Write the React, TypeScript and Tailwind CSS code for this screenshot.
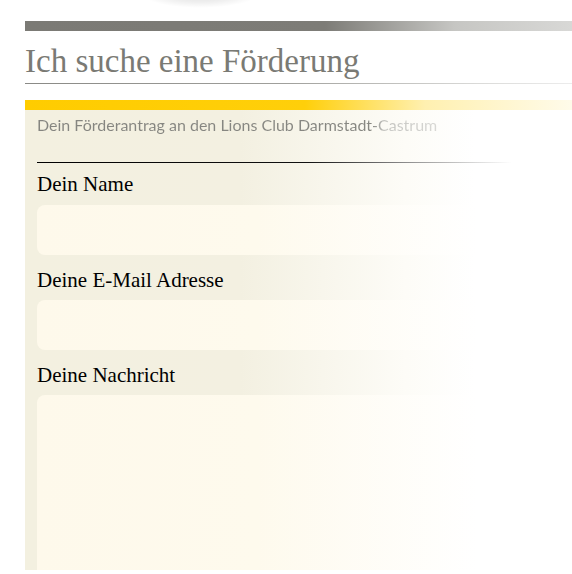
const serif = { fontFamily: '"Liberation Serif", "Times New Roman", serif' }
const lato = { fontFamily: 'Lato, "Open Sans", sans-serif' }

function Field({ label, tall, first }: { label: string; tall?: boolean; first?: boolean }) {
  return (
    <div>
      <div
        style={serif}
        className={`${first ? 'mt-[9px]' : 'mt-[13px]'} text-[21px] leading-[24px] text-black`}
      >
        {label}
      </div>
      <div
        className={`${first ? 'mt-[9px]' : 'mt-[8px]'} ${tall ? 'h-[220px]' : 'h-[50px]'} rounded-[8px] bg-[linear-gradient(to_right,#fef9eb_0px,#fefaed_220px,#ffffff_440px)]`}
      />
    </div>
  )
}

export default function App() {
  return (
    <div className="relative h-[574px] w-[572px] overflow-hidden bg-white">
      {/* shadow of the round logo above */}
      <div className="pointer-events-none absolute left-[140px] top-[-22px] h-[30px] w-[120px] rounded-full bg-[radial-gradient(ellipse_at_center,rgba(0,0,0,0.14)_0%,rgba(0,0,0,0.06)_45%,rgba(0,0,0,0)_70%)]" />

      <div className="pl-[25px] pt-[21px]">
        <div className="h-[10px] bg-[linear-gradient(to_right,#7b7a75_0px,#7d7c77_300px,#c6c6c3_430px,#d8d8d6_547px)]" />

        <h1
          style={serif}
          className="mt-[14px] text-[33px] leading-[33px] font-normal text-[#7a7a74]"
        >
          Ich suche eine Förderung
        </h1>
        <div className="mt-[5px] h-px bg-[linear-gradient(to_right,#8a8a86_0px,#a0a09c_260px,#dcdcda_460px,#ececec_547px)]" />

        <div className="mt-[16px] h-[10px] bg-[linear-gradient(to_right,#ffcc00_0px,#ffcf0a_280px,#fff0b0_400px,#fffbea_547px)]" />

        <div className="h-[460px] overflow-hidden bg-[linear-gradient(to_right,#f3f0e0_0px,#f3f0e1_215px,#fdfcf7_380px,#ffffff_450px)] pl-[12px]">
          <p
            style={lato}
            className="pt-[5px] w-fit text-[16px] leading-[20px] bg-[linear-gradient(to_right,#858580_0px,#878782_334px,#c4c4c0_348px,#dcdcd9_410px)] bg-clip-text text-transparent"
          >
            Dein Förderantrag an den Lions Club Darmstadt-Castrum
          </p>
          <div className="mt-[27px] h-px bg-[linear-gradient(to_right,#000000_0px,#111111_270px,#9a9a9a_380px,rgba(255,255,255,0)_475px)]" />

          <Field label="Dein Name" first />
          <Field label="Deine E-Mail Adresse" />
          <Field label="Deine Nachricht" tall />
        </div>
      </div>
    </div>
  )
}
